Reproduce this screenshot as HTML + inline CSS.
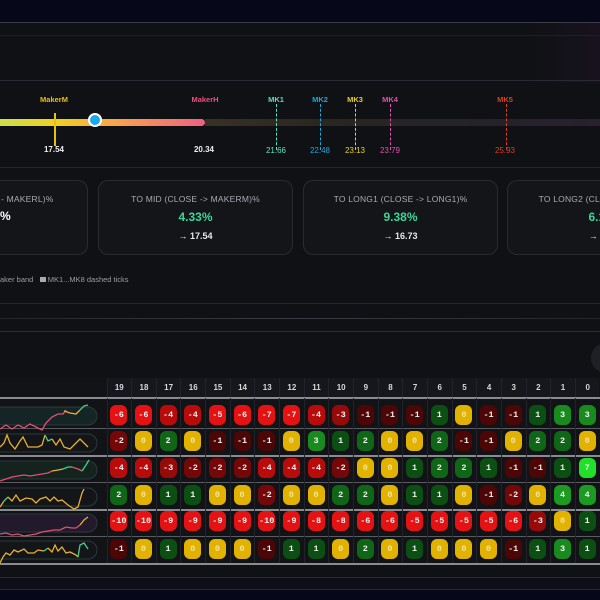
<!DOCTYPE html>
<html><head><meta charset="utf-8"><style>
*{margin:0;padding:0;box-sizing:border-box}
html,body{width:600px;height:600px;overflow:hidden}
body{background:#07071a;font-family:"Liberation Sans",sans-serif}
#w{position:relative;width:600px;height:600px;overflow:hidden}
.abs{position:absolute}
.card{position:absolute;top:180px;height:75px;background:#141519;border:1px solid #2a2b30;border-radius:10px;text-align:center;overflow:hidden}
.card .t{font-size:8.5px;color:#a9abb2;margin-top:13px;letter-spacing:.2px}
.card .v{font-size:12px;color:#3ad69a;font-weight:bold;margin-top:6px}
.card .a{font-size:9px;color:#e8e8ea;font-weight:bold;margin-top:7px}
.lbl{position:absolute;font-size:7.5px;font-weight:bold;transform:translateX(-50%)}
.val{position:absolute;font-size:8px;transform:translateX(-50%)}
.hd{position:absolute;top:378px;height:19px;font-size:8px;color:#d8d8dc;font-weight:bold;text-align:center;line-height:19px;border-left:1px solid #22232a;background:#16171c}
.b{position:absolute;width:17px;height:20px;border-radius:6px;font-size:8.5px;color:#eee;text-align:center;line-height:20px;font-family:"Liberation Mono",monospace;font-weight:bold}
.sep{position:absolute;left:0;width:600px;height:2px;background:#8a8b90}
</style></head><body><div id="w">
<div class="abs" style="left:0;top:22px;width:600px;height:1px;background:#3a3c48"></div>
<div class="abs" style="left:0;top:23px;width:600px;height:555px;background:#101115"></div>
<div class="abs" style="left:530px;top:23px;width:70px;height:60px;background:linear-gradient(90deg,rgba(24,16,30,0),#18121e)"></div>
<div class="abs" style="left:0;top:35px;width:600px;height:1px;background:#1e1f25"></div>
<div class="abs" style="left:0;top:80px;width:600px;height:1px;background:#2a2b32"></div>
<div class="abs" style="left:0;top:167px;width:600px;height:1px;background:#25262c"></div>
<div class="abs" style="left:205px;top:119px;width:395px;height:7px;background:linear-gradient(90deg,#3a3125,#2a2620 30%,#25232a 70%,#2a2030)"></div>
<div class="abs" style="left:-5px;top:119px;width:210px;height:7px;border-radius:4px;background:linear-gradient(90deg,#c8e050,#f0d020 30%,#f8a050 60%,#f06080)"></div>
<div class="abs" style="left:54px;top:113px;width:2px;height:33px;background:#e8c010"></div>
<div class="abs" style="left:88px;top:113px;width:14px;height:14px;border-radius:50%;background:#1aa8ee;border:2px solid #fff"></div>
<div class="lbl" style="left:54px;top:95px;color:#e8c010">MakerM</div>
<div class="lbl" style="left:205px;top:95px;color:#e8507a">MakerH</div>
<div class="val" style="left:54px;top:145px;color:#eee;font-weight:bold">17.54</div>
<div class="val" style="left:204px;top:145px;color:#eee;font-weight:bold">20.34</div>
<div class="abs" style="left:276px;top:104px;height:46px;border-left:1px dashed #5de0c0"></div>
<div class="abs" style="left:320px;top:104px;height:46px;border-left:1px dashed #1aa8d8"></div>
<div class="abs" style="left:355px;top:104px;height:46px;border-left:1px dashed #e8d020"></div>
<div class="abs" style="left:390px;top:104px;height:46px;border-left:1px dashed #e050b0"></div>
<div class="abs" style="left:506px;top:104px;height:46px;border-left:1px dashed #d84020"></div>
<div class="lbl" style="left:276px;top:95px;color:#5de0c0">MK1</div>
<div class="lbl" style="left:320px;top:95px;color:#1aa8d8">MK2</div>
<div class="lbl" style="left:355px;top:95px;color:#e8d020">MK3</div>
<div class="lbl" style="left:390px;top:95px;color:#e050b0">MK4</div>
<div class="lbl" style="left:505px;top:95px;color:#d84020">MK5</div>
<div class="val" style="left:276px;top:146px;color:#5de0c0">21.66</div>
<div class="val" style="left:320px;top:146px;color:#1aa8d8">22.48</div>
<div class="val" style="left:355px;top:146px;color:#e8d020">23.13</div>
<div class="val" style="left:390px;top:146px;color:#e050b0">23.79</div>
<div class="val" style="left:505px;top:146px;color:#d84020">25.93</div>
<div class="card" style="left:-106px;width:194px"><div class="t">TO LOW (CLOSE - MAKERL)%</div></div>
<div class="abs" style="left:0;top:209px;font-size:12px;font-weight:bold;color:#fff">%</div>
<div class="card" style="left:98px;width:195px"><div class="t">TO MID (CLOSE -&gt; MAKERM)%</div><div class="v">4.33%</div><div class="a">→ 17.54</div></div>
<div class="card" style="left:303px;width:195px"><div class="t">TO LONG1 (CLOSE -&gt; LONG1)%</div><div class="v">9.38%</div><div class="a">→ 16.73</div></div>
<div class="card" style="left:507px;width:93px;border-right:none;border-radius:10px 0 0 10px"><div style="position:absolute;left:0;top:0;width:195px"><div class="t">TO LONG2 (CLOSE -&gt; LONG2)%</div><div class="v">6.12%</div><div class="a">→ 17.11</div></div></div>
<div class="abs" style="left:0;top:275px;font-size:7.5px;color:#9a9ca2">aker band &nbsp;&nbsp;<span style="display:inline-block;width:6px;height:5px;background:#aaa"></span> MK1...MK8 dashed ticks</div>
<div class="abs" style="left:0;top:303px;width:600px;height:1px;background:#26272d"></div>
<div class="abs" style="left:0;top:318px;width:600px;height:1px;background:linear-gradient(90deg,#25262b,#3a3b42 50%,#25262b)"></div>
<div class="abs" style="left:0;top:331px;width:600px;height:1px;background:#2a2b31"></div>
<div class="abs" style="left:591px;top:343px;width:30px;height:30px;border-radius:50%;background:#1f2025"></div>
<div class="abs" style="left:0;top:378px;width:600px;height:186px;background:#121317"></div>
<div id="t"></div>
<svg class="abs" style="left:0;top:397px" width="106" height="167">
<g fill="none" stroke="#2a3a3a" stroke-width="1"><rect x="-10" y="10" width="107" height="18" rx="9" fill="#152425"/><rect x="-10" y="37" width="107" height="18" rx="9" fill="#141518"/><rect x="-10" y="64" width="107" height="18" rx="9" fill="#15231f"/><rect x="-10" y="91" width="107" height="18" rx="9" fill="#141518"/><rect x="-10" y="117" width="107" height="18" rx="9" fill="#221a2c"/><rect x="-10" y="144" width="107" height="18" rx="9" fill="#141518"/></g>
<g fill="none" stroke-width="1.3">
<polyline stroke="#e05070" points="0,32 6,28 12,32 18,28 24,31 30,27 36,30 42,33 46,26 52,20 58,17 63,17 66,13"/><polyline stroke="#e8b030" points="64,14 70,16 76,17 80,13"/><polyline stroke="#40d090" points="80,13 84,9 88,8"/>
<polyline stroke="#e8b030" points="0,50 4,46 7,38 10,46 15,52 20,44 23,40 28,50 32,50 38,50 42,48 45,38"/><polyline stroke="#40d090" points="45,38 48,44 52,42"/><polyline stroke="#e8b030" points="52,42 56,48 60,42 64,50 70,52 76,46 80,42 84,46 88,50"/>
<polyline stroke="#e05070" points="0,84 6,82 12,80 18,79 24,78 30,79 36,78 42,77 48,76 52,74"/><polyline stroke="#e8b030" points="52,74 58,73 63,72"/><polyline stroke="#40d090" points="63,72 68,70 72,70"/><polyline stroke="#e05070" points="72,70 78,72 82,74"/><polyline stroke="#40d090" points="82,74 86,68 89,63"/>
<polyline stroke="#e8b030" points="0,110 4,104"/><polyline stroke="#40d090" points="4,104 8,100"/><polyline stroke="#e8b030" points="8,100 12,104 16,98 20,104 26,101 32,102 36,106 40,102 46,100 50,104 54,100 58,104 62,103 68,108 74,112 78,110 82,96 84,92"/>
<polyline stroke="#e05070" points="0,137 6,136 12,138 18,137 24,139 30,138 36,137 42,135 48,134 54,133 60,133 66,130 72,131 76,131 80,128"/><polyline stroke="#e8b030" points="80,128 84,123 88,120"/>
<polyline stroke="#e8b030" points="0,166 3,160 6,156 10,158 14,153 18,155 24,152 28,156 34,156 38,153 44,154"/><polyline stroke="#40d090" points="44,154 48,151"/><polyline stroke="#e8b030" points="48,151 52,155 55,148 58,154 62,150 66,156 70,155 76,158 78,160"/><polyline stroke="#40d090" points="78,160 80,148 84,146 88,152"/>
</g></svg>
<div class="abs" style="left:0;top:577px;width:600px;height:1px;background:#2a2b34"></div>
<div class="abs" style="left:0;top:578px;width:600px;height:11px;background:#0d0e18"></div>
<div class="abs" style="left:0;top:589px;width:600px;height:1px;background:#262734"></div>
<script>
var d=[[-6,-6,-4,-4,-5,-6,-7,-7,-4,-3,-1,-1,-1,1,0,-1,-1,1,3,3],
[-2,0,2,0,-1,-1,-1,0,3,1,2,0,0,2,-1,-1,0,2,2,0],
[-4,-4,-3,-2,-2,-2,-4,-4,-4,-2,0,0,1,2,2,1,-1,-1,1,7],
[2,0,1,1,0,0,-2,0,0,2,2,0,1,1,0,-1,-2,0,4,4],
[-10,-10,-9,-9,-9,-9,-10,-9,-8,-8,-6,-6,-5,-5,-5,-5,-6,-3,0,1],
[-1,0,1,0,0,0,-1,1,1,0,2,0,1,0,0,0,-1,1,3,1]];
var cy=[415,441,468,495,521,549],h='';
var sepY=[397,428,455,482,509,536,563];
sepY.forEach(function(y,i){h+='<div class="sep" style="top:'+y+'px;'+(i%2?'background:#5a5b60;height:1px':'')+'"></div>'});
for(var i=0;i<20;i++){var x=106.5+24.65*i;h+='<div class="hd" style="left:'+x+'px;width:24.65px">'+(19-i)+'</div>';
h+='<div class="abs" style="left:'+x+'px;top:398px;width:1px;height:165px;background:#22232a"></div>';}
function c(v){if(v<=-5)return'#e41212';if(v==-4)return'#b80c0c';if(v==-3)return'#960a0a';if(v==-2)return'#740707';if(v==-1)return'#4c0606';if(v==0)return'#e2b200';if(v==1)return'#0c4f12';if(v==2)return'#0f6616';if(v==3)return'#188a1e';if(v==4)return'#1c9a22';return'#22e02a'}
d.forEach(function(r,ri){r.forEach(function(v,i){var x=106.5+24.65*i+12.3-8.5;var col=(v==0)?'#f4e4a0':'#f0f0f0';h+='<div class="b" style="left:'+x+'px;top:'+(cy[ri]-10)+'px;background:'+c(v)+';color:'+col+'">'+v+'</div>'})});
document.getElementById('t').innerHTML=h;
</script>
</div></body></html>
